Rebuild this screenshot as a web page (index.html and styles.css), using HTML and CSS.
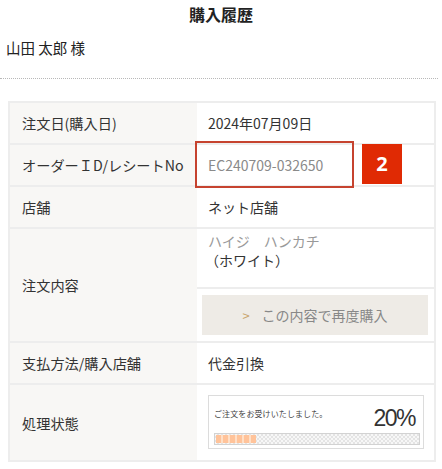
FILE: index.html
```html
<!DOCTYPE html>
<html lang="ja">
<head>
<meta charset="utf-8">
<link rel="stylesheet" href="styles.css">
</head>
<body>
<h1 class="title">購入履歴</h1>
<p class="name">山田 太郎 様</p>
<div class="divider"></div>
<div class="table">
  <div class="row r40">
    <div class="label">注文日(購入日)</div>
    <div class="value">2024年07月09日</div>
  </div>
  <div class="row r40">
    <div class="label">オーダーＩD/レシートNo</div>
    <div class="value id">EC240709-032650
      <span class="highlight"></span>
      <span class="badge">2</span>
    </div>
  </div>
  <div class="row r40">
    <div class="label">店舗</div>
    <div class="value">ネット店舗</div>
  </div>
  <div class="row r112">
    <div class="label">注文内容</div>
    <div class="value split">
      <div class="product">
        <div class="pname">ハイジ　ハンカチ</div>
        <div class="pcolor">（ホワイト）</div>
      </div>
      <div class="btnwrap">
        <div class="rebuy"><span class="chev">&gt;</span>この内容で再度購入</div>
      </div>
    </div>
  </div>
  <div class="row r40">
    <div class="label">支払方法/購入店舗</div>
    <div class="value">代金引換</div>
  </div>
  <div class="row r75">
    <div class="label">処理状態</div>
    <div class="value status">
      <div class="progress">
        <div class="ptop">
          <span class="pmsg">ご注文をお受けいたしました。</span>
          <span class="pct">20%</span>
        </div>
        <div class="bar"><div class="fill" style="width:20%"></div></div>
      </div>
    </div>
  </div>
</div>
</body>
</html>
```

FILE: styles.css
```css
html, body {
  margin: 0;
  padding: 0;
  background: #fff;
}
body {
  font-family: "Noto Sans CJK JP", "Noto Sans", sans-serif;
  color: #333;
  width: 442px;
}
.title {
  margin: 0;
  padding-top: 2px;
  font-size: 16px;
  line-height: 24px;
  font-weight: bold;
  text-align: center;
  color: #222;
}
.name {
  margin: 12px 0 0;
  padding-left: 6px;
  font-size: 14.5px;
  line-height: 20px;
  color: #222;
}
.divider {
  margin-top: 20px;
  width: 438px;
  border-top: 1px dotted #b8b8b8;
}
.table {
  margin: 22px 0 0 8px;
  width: 424px;
  border: 2px solid #ededed;
}
.row {
  display: grid;
  grid-template-columns: 187px 1fr;
  border-top: 2px solid #ededed;
}
.row:first-child {
  border-top: none;
}
.r40 { height: 40px; }
.r112 { height: 112px; }
.r75 { height: 75px; }
.label {
  background: #f8f7f5;
  padding-left: 12px;
  display: flex;
  align-items: center;
  font-size: 14.2px;
  color: #333;
  white-space: nowrap;
}
.value {
  padding-left: 11px;
  display: flex;
  align-items: center;
  font-size: 14px;
  color: #333;
  position: relative;
}
.value.id {
  color: #8a8a8a;
}
.highlight {
  position: absolute;
  left: -2px;
  top: -4px;
  width: 155px;
  height: 43px;
  border: 2px solid #c6432f;
}
.badge {
  position: absolute;
  left: 165px;
  top: -1px;
  width: 40px;
  height: 40px;
  background: #e02a04;
  color: #fff;
  font-family: "Open Sans", "Noto Sans", sans-serif;
  font-weight: bold;
  font-size: 20px;
  line-height: 40px;
  text-align: center;
}
.value.split {
  padding-left: 0;
  flex-direction: column;
  align-items: stretch;
}
.product {
  height: 60px;
  box-sizing: border-box;
  padding: 3px 0 0 11px;
  border-bottom: 2px solid #ededed;
  line-height: 19px;
}
.pname {
  color: #999;
}
.pcolor {
  color: #333;
  margin-left: -3px;
}
.btnwrap {
  padding: 6px 6px 4px 5px;
}
.rebuy {
  height: 40px;
  background: #eeebe6;
  display: flex;
  align-items: center;
  justify-content: center;
  color: #888;
  font-size: 14px;
}
.chev {
  color: #c9a46c;
  margin-right: 12px;
  font-size: 13px;
}
.value.status {
  align-items: flex-start;
  padding-top: 10px;
}
.progress {
  width: 216px;
  height: 54px;
  box-sizing: border-box;
  border: 1px solid #dcdcdc;
  padding: 9px 3px 0 5px;
}
.ptop {
  display: flex;
  align-items: center;
  justify-content: space-between;
  height: 26px;
}
.pmsg {
  font-size: 8px;
  line-height: 10px;
  color: #444;
  margin-bottom: 8px;
  letter-spacing: 0.1px;
}
.pct {
  font-family: "Liberation Sans", Arial, sans-serif;
  font-size: 23px;
  line-height: 26px;
  letter-spacing: -1.5px;
  color: #333;
  margin-right: 5px;
}
.bar {
  margin-top: 2px;
  height: 12px;
  box-sizing: border-box;
  border: 1px solid #d2d2d2;
  padding: 1px;
  background: conic-gradient(#e4e4e4 25%, #f7f7f7 0 50%, #e4e4e4 0 75%, #f7f7f7 0) 0 0 / 4px 4px;
}
.fill {
  height: 100%;
  background: repeating-linear-gradient(90deg, #ffc39a 0 5px, #ffdfc6 5px 7px);
}
```
